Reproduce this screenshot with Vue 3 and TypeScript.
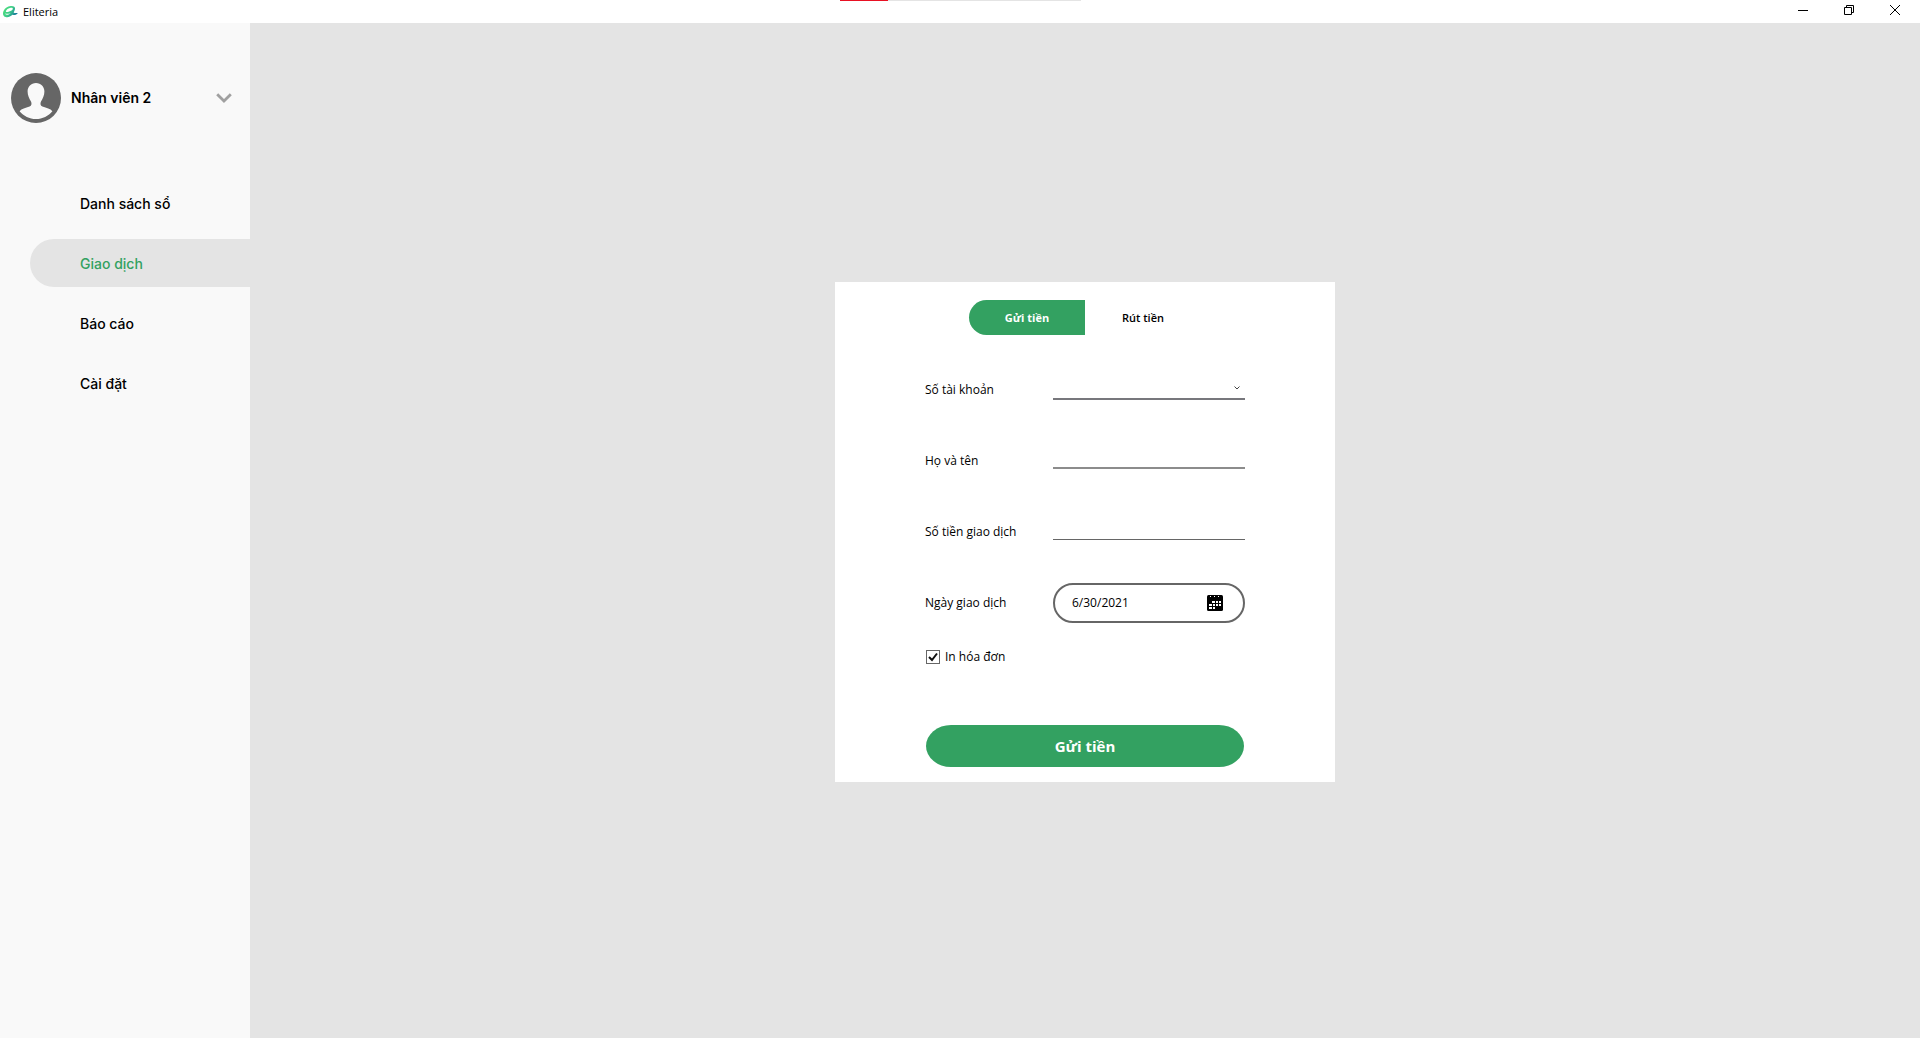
<script setup lang="ts">
import { ref } from 'vue'

type Mode = 'deposit' | 'withdraw'

const navItems: string[] = ['Danh sách sổ', 'Giao dịch', 'Báo cáo', 'Cài đặt']
const activeItem = ref('Giao dịch')

const tabs: { id: Mode; label: string }[] = [
  { id: 'deposit', label: 'Gửi tiền' },
  { id: 'withdraw', label: 'Rút tiền' },
]
const mode = ref<Mode>('deposit')

const account = ref('')
const fullName = ref('')
const amount = ref('')
const date = ref('6/30/2021')
const printReceipt = ref(true)
</script>

<template>
  <div class="window">
    <header class="titlebar">
      <svg class="logo" viewBox="0 0 16 14" aria-hidden="true">
        <defs>
          <linearGradient id="logo-fill" x1="0" y1="0" x2="1" y2="0.5">
            <stop offset="0" stop-color="#4fe07a" />
            <stop offset="0.55" stop-color="#3fcf88" />
            <stop offset="1" stop-color="#167a9c" />
          </linearGradient>
        </defs>
        <path
          fill="url(#logo-fill)"
          fill-rule="evenodd"
          d="M8.6 1C11.4 0.6 13.4 1.8 13 4C12.8 5.2 12.2 6.4 11.6 7.4C12.4 8.4 14 8 15.8 8C14.6 9.8 12.4 10.6 10.4 9.8C8.4 11.6 5.8 12.8 3.6 12C0.8 11 0.4 8.2 1.8 5.4C3 3 5.6 1.4 8.6 1ZM8.8 2.8C6.4 3 4 4.6 3.8 7C5.4 7.2 9.6 6.2 10.8 4.2C11.2 3.2 10.2 2.6 8.8 2.8ZM3 8.6C3.4 10 5.6 10.4 8.6 8.2C6.4 8.8 4.6 9 3 8.6Z"
        />
      </svg>
      <h1 class="app-name">Eliteria</h1>
      <div class="progress" aria-hidden="true"></div>
      <div class="controls">
        <button type="button" aria-label="Minimize">
          <svg viewBox="0 0 10 10"><path d="M0 5.5H10" /></svg>
        </button>
        <button type="button" aria-label="Restore">
          <svg viewBox="0 0 10 10"><path d="M0.5 2.5H7.5V9.5H0.5ZM2.5 2.5V0.5H9.5V7.5H7.5" /></svg>
        </button>
        <button type="button" aria-label="Close">
          <svg viewBox="0 0 10 10"><path d="M0 0L10 10M10 0L0 10" /></svg>
        </button>
      </div>
    </header>

    <div class="body">
      <aside class="sidebar">
        <button type="button" class="profile">
          <svg class="avatar" viewBox="0 0 50 50" aria-hidden="true">
            <circle cx="25" cy="25" r="25" fill="#666" />
            <path
              d="M25 10C30 10 33.4 13.6 33.4 18.6C33.4 22.6 31.8 25.6 30 28.4C29 30 29.4 32.8 31.4 33.6C35.6 35.2 39.4 35.6 41.4 38.2C37.4 43 31.6 46 25 46C18.4 46 12.6 43 8.6 38.2C10.6 35.6 14.4 35.2 18.6 33.6C20.6 32.8 21 30 20 28.4C18.2 25.6 16.6 22.6 16.6 18.6C16.6 13.6 20 10 25 10Z"
              fill="#f9f9f9"
            />
          </svg>
          <span class="user-name">Nhân viên 2</span>
          <svg class="chevron" viewBox="0 0 16 10" aria-hidden="true">
            <path d="M1.2 1.2L8 8L14.8 1.2" fill="none" stroke="#a0a0a0" stroke-width="2.8" />
          </svg>
        </button>
        <nav class="nav">
          <a
            v-for="item in navItems"
            :key="item"
            href="#"
            :class="{ active: item === activeItem }"
            @click.prevent="activeItem = item"
          >{{ item }}</a>
        </nav>
      </aside>

      <main class="content">
        <form class="card" @submit.prevent>
          <div class="tabs">
            <button
              v-for="tab in tabs"
              :key="tab.id"
              type="button"
              :class="{ active: tab.id === mode }"
              @click="mode = tab.id"
            >{{ tab.label }}</button>
          </div>

          <div class="row">
            <label for="account">Số tài khoản</label>
            <div class="select">
              <select id="account" v-model="account">
                <option value=""></option>
              </select>
              <svg viewBox="0 0 6 4" aria-hidden="true">
                <path d="M0.5 0.5L3 3L5.5 0.5" fill="none" stroke="#444" />
              </svg>
            </div>
          </div>
          <div class="row">
            <label for="full-name">Họ và tên</label>
            <input id="full-name" v-model="fullName" class="line" type="text" />
          </div>
          <div class="row">
            <label for="amount">Số tiền giao dịch</label>
            <input id="amount" v-model="amount" class="line thin" type="text" />
          </div>
          <div class="row">
            <label for="date">Ngày giao dịch</label>
            <div class="date">
              <input id="date" v-model="date" type="text" />
              <button type="button" aria-label="Chọn ngày">
                <svg viewBox="0 0 16 16">
                  <rect width="16" height="16" rx="1.5" fill="#000" />
                  <path
                    fill="#fff"
                    d="M3 1h1v1h-1zM7 1h1v1h-1zM11 1h1v1h-1zM5 6h3v2h-3zM9 6h2v2h-2zM12 6h2v2h-2zM2 9h3v2h-3zM6 9h2v2h-2zM9 9h2v2h-2zM12 9h2v2h-2zM2 12h3v2h-3zM6 12h2v2h-2z"
                  />
                </svg>
              </button>
            </div>
          </div>

          <label class="check">
            <input v-model="printReceipt" type="checkbox" />
            <span>In hóa đơn</span>
          </label>

          <button type="submit" class="submit">Gửi tiền</button>
        </form>
      </main>
    </div>
  </div>
</template>

<style>
body {
  margin: 0;
}
</style>

<style scoped>
* {
  box-sizing: border-box;
}

.window {
  display: flex;
  flex-direction: column;
  min-height: 100vh;
  font: 12px/16px "Open Sans", "Noto Sans", sans-serif;
  color: #000;
}

button,
input,
select {
  margin: 0;
  padding: 0;
  border: 0;
  border-radius: 0;
  background: none;
  font: inherit;
  color: inherit;
  outline: none;
}

.titlebar {
  position: relative;
  display: flex;
  align-items: center;
  height: 23px;
  padding: 0 2px;
  background: #fff;
}

.logo {
  width: 16px;
  height: 14px;
}

.app-name {
  margin: 0 0 0 5px;
  font-size: 11px;
  font-weight: 400;
}

.progress {
  position: absolute;
  top: 0;
  left: 0;
  right: 0;
  width: 241px;
  height: 1px;
  margin: 0 auto;
  background: linear-gradient(to right, #e81123 20%, #e4e4e4 20%);
}

.controls {
  display: flex;
  align-self: stretch;
  margin-left: auto;
}

.controls button {
  display: grid;
  place-items: center;
  width: 46px;
  padding-bottom: 3px;
}

.controls svg {
  width: 10px;
  height: 10px;
  fill: none;
  stroke: #000;
}

.body {
  flex: 1;
  display: flex;
}

.sidebar {
  flex: 0 0 250px;
  padding-top: 50px;
  background: #f9f9f9;
  font-family: Inter, sans-serif;
}

.profile {
  display: flex;
  align-items: center;
  width: 100%;
  padding: 0 18px 0 11px;
}

.avatar {
  width: 50px;
  height: 50px;
}

.user-name {
  margin-left: 10px;
  font-size: 14px;
  font-weight: 600;
}

.chevron {
  width: 16px;
  height: 10px;
  margin-left: auto;
}

.nav {
  display: flex;
  flex-direction: column;
  gap: 12px;
  margin-top: 56px;
  padding-left: 30px;
}

.nav a {
  height: 48px;
  padding-left: 50px;
  border-radius: 24px 0 0 24px;
  font-size: 14px;
  font-weight: 500;
  line-height: 50px;
  color: #000;
  text-decoration: none;
}

.nav a.active {
  background: #e4e4e4;
  color: #33a161;
}

.content {
  flex: 1;
  display: flex;
  align-items: center;
  justify-content: center;
  padding-top: 3px;
  background: #e4e4e4;
}

.card {
  display: flex;
  flex-direction: column;
  width: 500px;
  padding: 18px 90px 15px;
  background: #fff;
}

.tabs {
  display: flex;
  justify-content: center;
  margin-bottom: 19px;
}

.tabs button {
  width: 116px;
  height: 35px;
  font-size: 11px;
  font-weight: 600;
}

.tabs button.active {
  border-radius: 18px 0 0 18px;
  background: #33a161;
  font-weight: 700;
  color: #fff;
}

.row {
  display: flex;
  align-items: center;
  justify-content: space-between;
  height: 71px;
}

.row > :last-child {
  width: 192px;
}

.select {
  position: relative;
  height: 20px;
}

.select select {
  display: block;
  width: 100%;
  height: 20px;
  border-bottom: 2px solid #77777c;
  appearance: none;
}

.select svg {
  position: absolute;
  top: 6px;
  right: 5px;
  width: 6px;
  height: 4px;
  pointer-events: none;
}

.line {
  height: 16px;
  border-bottom: 2px solid #8c8c8c;
}

.line.thin {
  border-bottom: 1px solid #666;
}

.date {
  display: flex;
  align-items: center;
  height: 40px;
  padding: 0 20px 0 17px;
  border: 2px solid #666;
  border-radius: 20px;
}

.date input {
  flex: 1;
  min-width: 0;
}

.date svg {
  display: block;
  width: 16px;
  height: 16px;
}

.check {
  display: flex;
  align-items: center;
  align-self: flex-start;
  gap: 5px;
  margin: 11px 0 60px 1px;
}

.check input {
  width: 14px;
  height: 14px;
  border: 1px solid #666;
  appearance: none;
}

.check input:checked {
  background: url("data:image/svg+xml,%3Csvg xmlns='http://www.w3.org/2000/svg' viewBox='0 0 12 12'%3E%3Cpath d='M2 6L5 9L10 2.5' fill='none' stroke='%23111' stroke-width='2'/%3E%3C/svg%3E") center / 12px no-repeat;
}

.submit {
  height: 42px;
  margin: 0 1px;
  border-radius: 25px / 21px;
  background: #33a161;
  font-size: 15px;
  font-weight: 700;
  color: #fff;
}
</style>
